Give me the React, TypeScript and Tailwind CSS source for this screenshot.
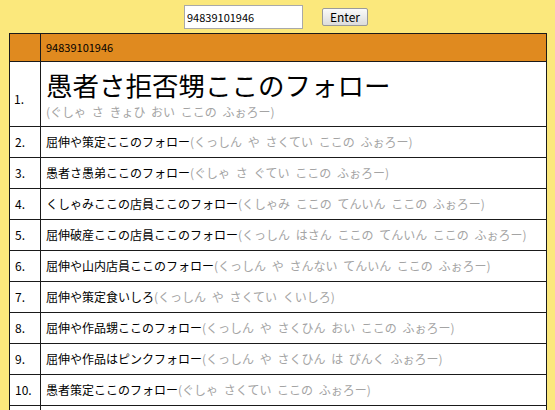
const rows = [
  { word: "屈伸や策定ここのフォロー", reading: "(くっしん や さくてい ここの ふぉろー)" },
  { word: "愚者さ愚弟ここのフォロー", reading: "(ぐしゃ さ ぐてい ここの ふぉろー)" },
  { word: "くしゃみここの店員ここのフォロー", reading: "(くしゃみ ここの てんいん ここの ふぉろー)" },
  { word: "屈伸破産ここの店員ここのフォロー", reading: "(くっしん はさん ここの てんいん ここの ふぉろー)" },
  { word: "屈伸や山内店員ここのフォロー", reading: "(くっしん や さんない てんいん ここの ふぉろー)" },
  { word: "屈伸や策定食いしろ", reading: "(くっしん や さくてい くいしろ)" },
  { word: "屈伸や作品甥ここのフォロー", reading: "(くっしん や さくひん おい ここの ふぉろー)" },
  { word: "屈伸や作品はピンクフォロー", reading: "(くっしん や さくひん は ぴんく ふぉろー)" },
  { word: "愚者策定ここのフォロー", reading: "(ぐしゃ さくてい ここの ふぉろー)" },
  { word: "屈伸や策定ここの店員", reading: "(くっしん や さくてい ここの てんいん)" },
];

export default function App() {
  return (
    <div className="h-[410px] overflow-hidden bg-[#fbe87c] font-['Noto_Sans_CJK_JP',sans-serif] text-black">
      <div className="flex justify-center items-center pt-[5px] pr-[3px]">
        <input
          type="text"
          defaultValue="94839101946"
          className="w-[119px] h-[24px] bg-white border border-[#a9a9a9] px-[2px] text-[11px] leading-none outline-none"
        />
        <button
          type="button"
          className="ml-[19px] w-[46px] h-[18px] rounded-[2px] border border-[#9a9a9a] bg-gradient-to-b from-[#fafafa] to-[#dcdcdc] text-[12px] leading-none"
        >
          Enter
        </button>
      </div>

      <table className="mt-[4px] ml-[9px] w-[538px] border-collapse">
        <thead>
          <tr className="h-[28px] bg-[#e08a1f]">
            <th className="w-[31px] border border-[#1a1a1a]" />
            <th className="border border-[#1a1a1a] pl-[5px] text-left text-[11px] font-normal">
              94839101946
            </th>
          </tr>
        </thead>
        <tbody className="bg-white">
          <tr className="h-[65px]">
            <td className="border border-[#1a1a1a] pl-[4px] pt-[10px] text-[12px]">1.</td>
            <td className="border border-[#1a1a1a] pl-[5px] pt-[2px]">
              <div className="text-[26.5px] leading-[28px]">愚者さ拒否甥ここのフォロー</div>
              <div className="mt-[5px] text-[12px] leading-[15px] [word-spacing:3px] text-[#a4a4a4]">
                (ぐしゃ さ きょひ おい ここの ふぉろー)
              </div>
            </td>
          </tr>
          {rows.map((row, i) => (
            <tr key={i} className="h-[31px]">
              <td className="border border-[#1a1a1a] pl-[5px] text-[12px]">{i + 2}.</td>
              <td className="border border-[#1a1a1a] pl-[5px] text-[12px] whitespace-nowrap">
                {row.word}
                <span className="[word-spacing:3px] text-[#a4a4a4]">{row.reading}</span>
              </td>
            </tr>
          ))}
        </tbody>
      </table>
    </div>
  );
}
